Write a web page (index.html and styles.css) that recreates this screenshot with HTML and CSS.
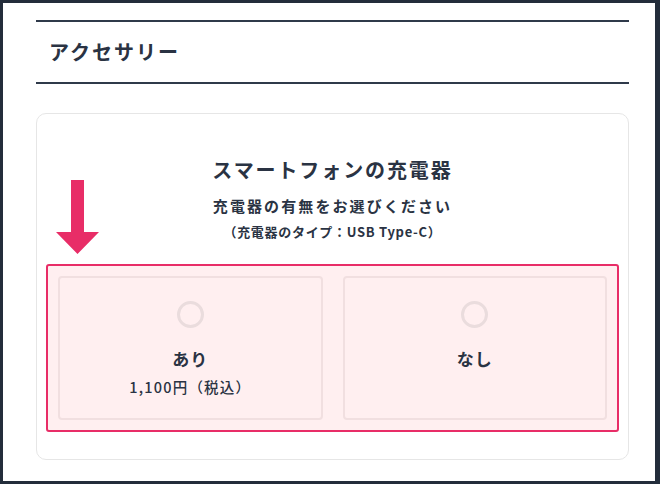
FILE: index.html
```html
<!DOCTYPE html>
<html lang="ja">
<head>
<meta charset="utf-8">
<link rel="stylesheet" href="styles.css">
</head>
<body>
<div class="frame">
  <div class="section-head">
    <h2 class="section-title">アクセサリー</h2>
  </div>
  <div class="card">
    <svg class="arrow" width="43" height="74" viewBox="0 0 43 74">
      <path d="M15 0 H28 V52 H43 L21.5 74 L0 52 H15 Z" fill="#e82d67"/>
    </svg>
    <h3 class="card-title">スマートフォンの充電器</h3>
    <p class="card-sub">充電器の有無をお選びください</p>
    <p class="card-note">（充電器のタイプ：USB Type-C）</p>
    <div class="choices">
      <div class="option">
        <span class="radio"></span>
        <span class="opt-label">あり</span>
        <span class="opt-price">1,100円（税込）</span>
      </div>
      <div class="option">
        <span class="radio"></span>
        <span class="opt-label">なし</span>
      </div>
    </div>
  </div>
</div>
</body>
</html>
```
FILE: styles.css
```css
html, body {
  margin: 0;
  padding: 0;
}
body {
  background: #232d3b;
  width: 660px;
  height: 484px;
  overflow: hidden;
  font-family: "Noto Sans CJK JP", "Noto Sans", sans-serif;
  color: #2a3343;
}
.frame {
  margin: 3px 5px 0 3px;
  height: 478px;
  background: #ffffff;
  padding: 17px 26px 0 33px;
  box-sizing: border-box;
}
.section-head {
  border-top: 2px solid #2f3a4a;
  border-bottom: 2px solid #2f3a4a;
  height: 60px;
  display: flex;
  align-items: center;
  padding-left: 13px;
}
.section-title {
  margin: 0;
  font-size: 20px;
  font-weight: 700;
  letter-spacing: 2px;
  line-height: 30px;
}
.card {
  position: relative;
  margin-top: 29px;
  border: 1px solid #e6e6e6;
  border-radius: 10px;
  padding: 41px 9px 27px 9px;
  display: flex;
  flex-direction: column;
  align-items: center;
}
.arrow {
  position: absolute;
  left: 19px;
  top: 66px;
}
.card-title {
  margin: 0;
  font-size: 20px;
  line-height: 30px;
  font-weight: 700;
  letter-spacing: 1.9px;
}
.card-sub {
  margin: 9px 0 0;
  font-size: 15px;
  line-height: 24px;
  font-weight: 700;
  letter-spacing: 2.1px;
}
.card-note {
  margin: 4px 0 0;
  font-size: 13px;
  line-height: 20px;
  font-weight: 700;
  letter-spacing: 0.7px;
}
.choices {
  align-self: stretch;
  margin-top: 22px;
  border: 2px solid #e82d67;
  border-radius: 3px;
  background: #ffeff0;
  padding: 10px;
  display: grid;
  grid-template-columns: 1fr 1fr;
  gap: 20px;
}
.option {
  height: 144px;
  box-sizing: border-box;
  border: 2px solid #f1dfe0;
  border-radius: 4px;
  display: flex;
  flex-direction: column;
  align-items: center;
  padding-top: 23px;
}
.radio {
  width: 27px;
  height: 27px;
  box-sizing: border-box;
  border: 3px solid #eadcdd;
  border-radius: 50%;
}
.opt-label {
  margin-top: 18px;
  font-size: 17px;
  line-height: 26px;
  font-weight: 700;
  letter-spacing: 1px;
}
.opt-price {
  margin-top: 4px;
  font-size: 14.5px;
  line-height: 22px;
  font-weight: 500;
  letter-spacing: 1.2px;
}
```
